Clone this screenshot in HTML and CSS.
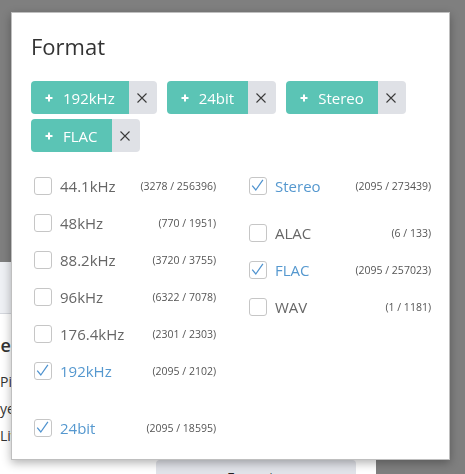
FILE: index.html
```html
<!DOCTYPE html>
<html lang="en">
<head>
    <meta charset="UTF-8">
    <meta name="viewport" content="width=device-width, initial-scale=1.0">
    <title>Format filter</title>
    <link rel="stylesheet" href="styles.css">
</head>
<body>
    <!-- dialog underneath (mostly covered) -->
    <div class="sheet">
        <div class="sheet-head"></div>
        <div class="sheet-body">
            <h3 class="sheet-title">Label</h3>
            <p class="sheet-line">Pictures</p>
            <p class="sheet-line">yearly</p>
            <p class="sheet-line">Live</p>
        </div>
        <div class="sheet-foot">
            <button class="sheet-btn">Format…</button>
        </div>
    </div>

    <!-- format dialog -->
    <div class="modal">
        <h2 class="modal-title">Format</h2>

        <div class="tags">
            <span class="tag">
                <span class="tag-main"><svg class="plus" viewBox="0 0 8 8"><path d="M4 0.5v7M0.5 4h7"/></svg>192kHz</span>
                <span class="tag-remove"><svg class="cross" viewBox="0 0 10 10"><path d="M0.5 0.5l9 9M9.5 0.5l-9 9"/></svg></span>
            </span>
            <span class="tag">
                <span class="tag-main"><svg class="plus" viewBox="0 0 8 8"><path d="M4 0.5v7M0.5 4h7"/></svg>24bit</span>
                <span class="tag-remove"><svg class="cross" viewBox="0 0 10 10"><path d="M0.5 0.5l9 9M9.5 0.5l-9 9"/></svg></span>
            </span>
            <span class="tag">
                <span class="tag-main"><svg class="plus" viewBox="0 0 8 8"><path d="M4 0.5v7M0.5 4h7"/></svg>Stereo</span>
                <span class="tag-remove"><svg class="cross" viewBox="0 0 10 10"><path d="M0.5 0.5l9 9M9.5 0.5l-9 9"/></svg></span>
            </span>
            <span class="tag">
                <span class="tag-main"><svg class="plus" viewBox="0 0 8 8"><path d="M4 0.5v7M0.5 4h7"/></svg>FLAC</span>
                <span class="tag-remove"><svg class="cross" viewBox="0 0 10 10"><path d="M0.5 0.5l9 9M9.5 0.5l-9 9"/></svg></span>
            </span>
        </div>

        <div class="options">
            <div class="col col-left">
                <ul class="group">
                    <li class="option"><span class="box"></span><span class="name">44.1kHz</span><span class="count">(3278 / 256396)</span></li>
                    <li class="option"><span class="box"></span><span class="name">48kHz</span><span class="count">(770 / 1951)</span></li>
                    <li class="option"><span class="box"></span><span class="name">88.2kHz</span><span class="count">(3720 / 3755)</span></li>
                    <li class="option"><span class="box"></span><span class="name">96kHz</span><span class="count">(6322 / 7078)</span></li>
                    <li class="option"><span class="box"></span><span class="name">176.4kHz</span><span class="count">(2301 / 2303)</span></li>
                    <li class="option checked"><span class="box"><svg class="check" viewBox="0 0 18 18"><path d="M2.5 8.5l4 5L14.5 2"/></svg></span><span class="name">192kHz</span><span class="count">(2095 / 2102)</span></li>
                </ul>
                <ul class="group">
                    <li class="option checked"><span class="box"><svg class="check" viewBox="0 0 18 18"><path d="M2.5 8.5l4 5L14.5 2"/></svg></span><span class="name">24bit</span><span class="count">(2095 / 18595)</span></li>
                </ul>
            </div>
            <div class="col col-right">
                <ul class="group">
                    <li class="option checked"><span class="box"><svg class="check" viewBox="0 0 18 18"><path d="M2.5 8.5l4 5L14.5 2"/></svg></span><span class="name">Stereo</span><span class="count">(2095 / 273439)</span></li>
                </ul>
                <ul class="group">
                    <li class="option"><span class="box"></span><span class="name">ALAC</span><span class="count">(6 / 133)</span></li>
                    <li class="option checked"><span class="box"><svg class="check" viewBox="0 0 18 18"><path d="M2.5 8.5l4 5L14.5 2"/></svg></span><span class="name">FLAC</span><span class="count">(2095 / 257023)</span></li>
                    <li class="option"><span class="box"></span><span class="name">WAV</span><span class="count">(1 / 1181)</span></li>
                </ul>
            </div>
        </div>
    </div>
</body>
</html>
```

FILE: styles.css
```css
body {
    font-family: "Open Sans", Arial, sans-serif;
    margin: 0;
    padding: 0;
    background-color: #7f7f7f;
    overflow: hidden;
}

/* dialog behind */
.sheet {
    position: fixed;
    left: -330px;
    top: 262px;
    width: 706px;
    background-color: #fff;
}
.sheet-head {
    height: 51px;
    background-color: #eef0f4;
    border-bottom: 1px solid #d4d7dd;
}
.sheet-body {
    height: 146px;
    box-sizing: border-box;
    padding: 18px 0 0 330px;
    color: #333;
}
.sheet-title {
    margin: 0 0 10px -31px;
    font-size: 18px;
    font-weight: 600;
    line-height: 26px;
}
.sheet-line {
    margin: 0;
    font-size: 14px;
    line-height: 27px;
}
.sheet-foot {
    display: flex;
    justify-content: flex-end;
    padding-right: 20px;
}
.sheet-btn {
    width: 200px;
    height: 34px;
    border: none;
    border-radius: 4px;
    background-color: #e1e3e9;
    font-family: inherit;
    font-size: 14px;
    color: #222;
}

/* format dialog */
.modal {
    position: fixed;
    left: 11px;
    top: 12px;
    width: 439px;
    height: 448px;
    box-sizing: border-box;
    padding: 18px 19px;
    background-color: #fff;
    border: 1px solid rgba(0, 0, 0, 0.25);
    box-shadow: 0 3px 9px rgba(0, 0, 0, 0.3);
}
.modal-title {
    margin: 0;
    font-size: 22px;
    font-weight: 400;
    line-height: 30px;
    color: #333;
}

.tags {
    display: flex;
    flex-wrap: wrap;
    gap: 5px 10px;
    margin-top: 20px;
}
.tag {
    display: flex;
    height: 33px;
}
.tag-main {
    display: flex;
    align-items: center;
    gap: 10px;
    padding: 0 14px;
    background-color: #5bc4b5;
    color: #fff;
    font-size: 15px;
    border-radius: 4px 0 0 4px;
}
.plus {
    width: 8px;
    height: 8px;
    fill: none;
    stroke: #fff;
    stroke-width: 2;
}
.tag-remove {
    display: flex;
    align-items: center;
    padding: 0 10px 0 8px;
    background-color: #dfe1e6;
    border-radius: 0 4px 4px 0;
}
.cross {
    width: 10px;
    height: 10px;
    fill: none;
    stroke: #3a3a3a;
    stroke-width: 1.1;
}

.options {
    display: grid;
    grid-template-columns: 182px 182px;
    column-gap: 33px;
    margin-top: 15px;
    padding-left: 3px;
}
.col {
    display: flex;
    flex-direction: column;
}
.col-left {
    gap: 20px;
}
.col-right {
    gap: 10px;
}
.group {
    list-style-type: none;
    margin: 0;
    padding: 0;
}
.option {
    display: flex;
    align-items: center;
    height: 37px;
}
.box {
    width: 18px;
    height: 18px;
    box-sizing: border-box;
    border: 1px solid #c6c6c6;
    border-radius: 3px;
    flex-shrink: 0;
}
.check {
    display: block;
    width: 16px;
    height: 16px;
    fill: none;
    stroke: #4f93cf;
    stroke-width: 1.4;
}
.name {
    margin-left: 8px;
    font-size: 15px;
    color: #666;
}
.checked .name {
    color: #5598cf;
}
.count {
    margin-left: auto;
    font-size: 10.5px;
    color: #555;
}
```
